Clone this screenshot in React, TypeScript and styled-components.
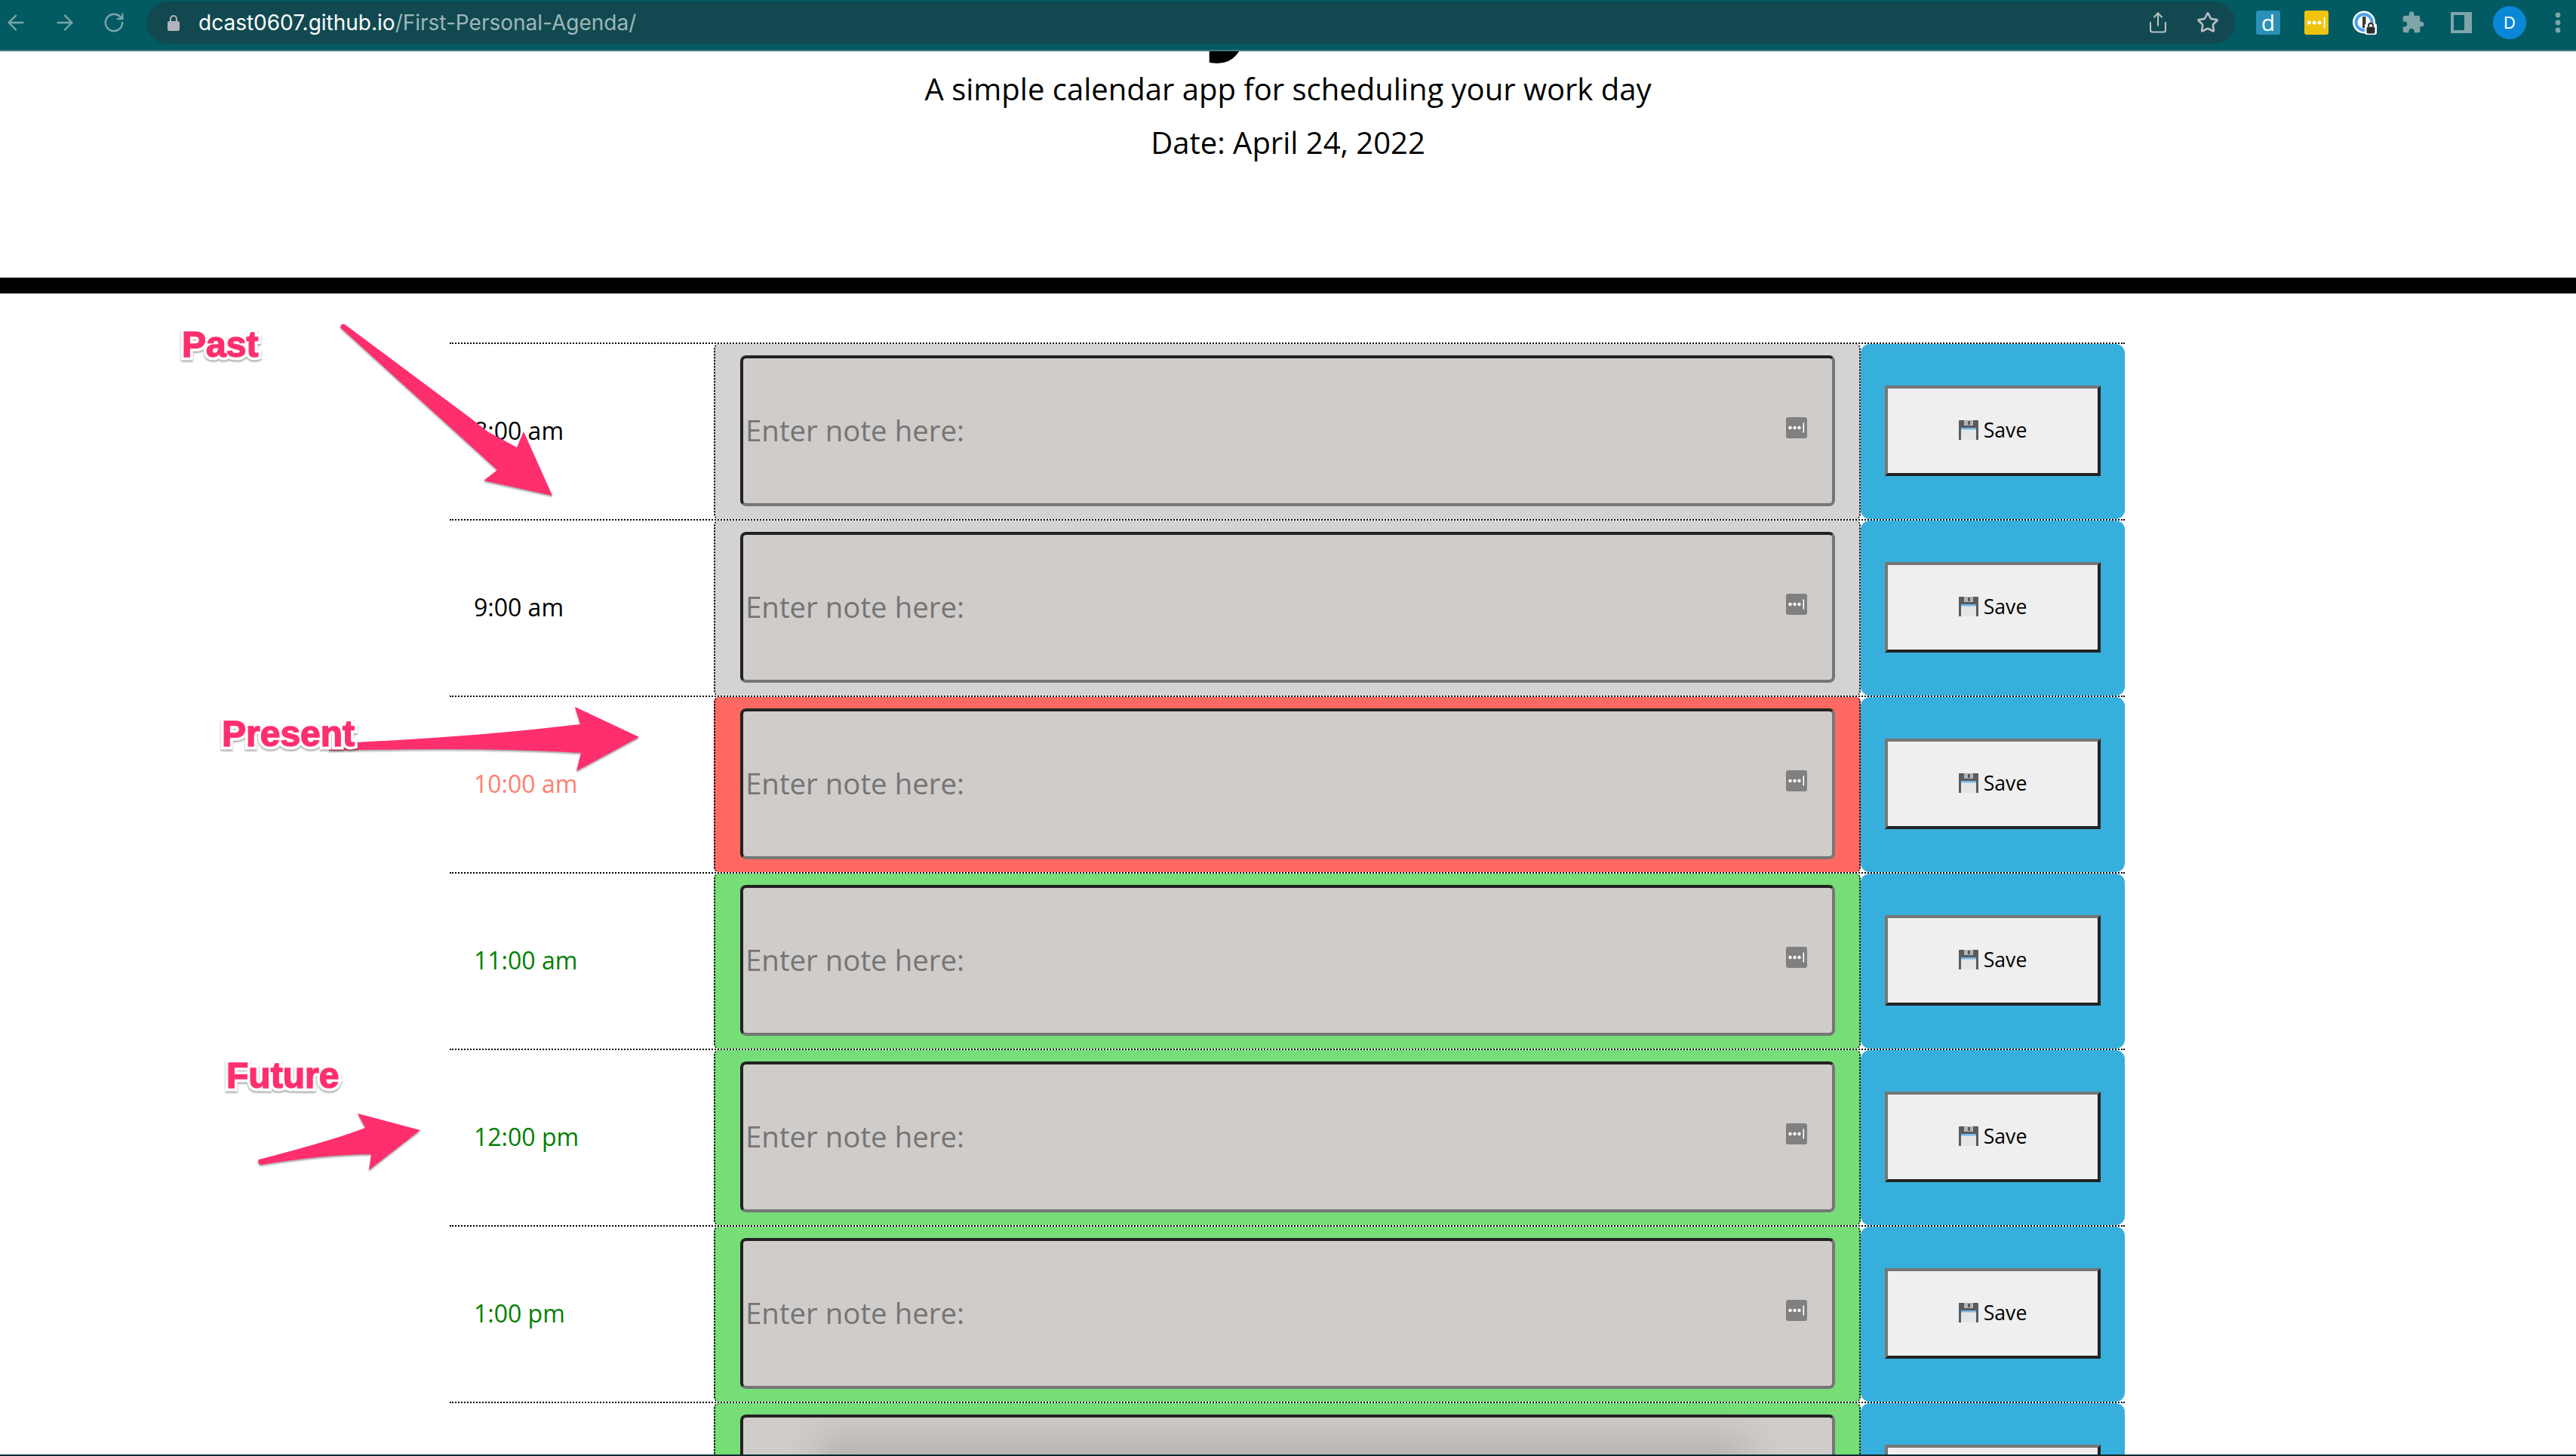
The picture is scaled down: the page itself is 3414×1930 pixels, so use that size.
import { FC } from 'react'
import styled, { createGlobalStyle } from 'styled-components'
import { ArrowLeft, ArrowRight, RotateCw, Share, Star } from 'lucide-react'

type BlockState = 'past' | 'present' | 'future'

const blocks: { hour: string; state: BlockState }[] = [
  { hour: '8:00 am', state: 'past' },
  { hour: '9:00 am', state: 'past' },
  { hour: '10:00 am', state: 'present' },
  { hour: '11:00 am', state: 'future' },
  { hour: '12:00 pm', state: 'future' },
  { hour: '1:00 pm', state: 'future' },
  { hour: '2:00 pm', state: 'future' },
]

const cellColors: Record<BlockState, string> = {
  past: '#d3d3d3',
  present: '#ff6961',
  future: '#77dd77',
}

const hourColors: Record<BlockState, string> = {
  past: '#000',
  present: '#ff8070',
  future: '#008000',
}

const GlobalStyle = createGlobalStyle`
  html, body {
    margin: 0;
    padding: 0;
    background: #fff;
    font-family: 'Open Sans', sans-serif;
  }
`

const Page = styled.div`
  position: relative;
  width: 3414px;
  height: 1930px;
  overflow: hidden;
`

const Toolbar = styled.div`
  position: relative;
  z-index: 3;
  display: flex;
  align-items: center;
  height: 68px;
  box-sizing: border-box;
  padding: 0 8px 6px 5px;
  background: #025a62;
  border-bottom: 2px solid #3d7b80;
`

const NavGroup = styled.div`
  display: flex;
  gap: 33px;
  margin-right: 27px;
  color: #7ba5a8;
`

const ToolButton = styled.div`
  display: flex;
  align-items: center;
  justify-content: center;
  width: 32px;
  height: 44px;
  flex: none;
`

const UrlPill = styled.div`
  display: flex;
  align-items: center;
  flex: 1;
  height: 56px;
  margin-right: 28px;
  padding: 0 21px 0 28px;
  border-radius: 28px;
  background: #124951;
`

const Url = styled.div`
  flex: 1;
  margin-left: 25px;
  font-family: 'Inter', sans-serif;
  font-size: 28px;
  color: #9db7ba;
`

const Host = styled.span`
  color: #fff;
`

const PillIcons = styled.div`
  display: flex;
  align-items: center;
  gap: 36px;
  color: #b6bec0;
`

const Extensions = styled.div`
  display: flex;
  align-items: center;
  gap: 32px;
  color: #7fa5a8;
`

const ExtensionTile = styled.div<{ $bg: string }>`
  display: flex;
  align-items: center;
  justify-content: center;
  width: 32px;
  height: 32px;
  border-radius: 3px;
  background: ${({ $bg }) => $bg};
  color: #fff;
  font-family: 'Open Sans', sans-serif;
  font-size: 30px;
  line-height: 32px;
  flex: none;
`

const Avatar = styled.div`
  display: flex;
  align-items: center;
  justify-content: center;
  width: 44px;
  height: 44px;
  margin-left: -6px;
  margin-right: -6px;
  border-radius: 50%;
  background: #0a88d8;
  color: #fff;
  font-family: 'Inter', sans-serif;
  font-size: 22px;
  flex: none;
`

const Header = styled.header`
  display: flow-root;
  height: 321px;
  box-sizing: border-box;
  text-align: center;
  border-bottom: 21px solid #000;
`

const Title = styled.h1`
  margin: -147px 0 23px;
  font-size: 144px;
  font-weight: 700;
  line-height: 144px;
  color: #000;
`

const Lead = styled.p`
  margin: 0 0 11px;
  font-size: 40px;
  line-height: 60px;
  color: #000;
`

const Schedule = styled.main`
  width: 2220px;
  margin: 65px 0 0 596px;
`

const Row = styled.div`
  display: grid;
  grid-template-columns: 350px 1520px 350px;
  height: 234px;
  box-sizing: border-box;
  border-top: 2px dotted #000;
`

const Hour = styled.div<{ $state: BlockState }>`
  display: flex;
  align-items: center;
  padding: 0 0 4px 32px;
  font-size: 32px;
  color: ${({ $state }) => hourColors[$state]};
`

const NoteCell = styled.div<{ $state: BlockState }>`
  box-sizing: border-box;
  padding: 15px 32px 0 33px;
  background: ${({ $state }) => cellColors[$state]};
  border-left: 2px dotted #000;
  border-right: 2px dotted #000;
  border-radius: 6px;
`

const NoteBox = styled.div`
  position: relative;
  height: 200px;
`

const NoteInput = styled.textarea`
  display: block;
  width: 100%;
  height: 100%;
  box-sizing: border-box;
  margin: 0;
  padding: 68px 3px 0;
  resize: none;
  outline: none;
  background: #d0ccca;
  border-width: 4px;
  border-style: solid;
  border-color: #222 #767676 #767676 #222;
  border-radius: 8px;
  font-family: 'Open Sans', sans-serif;
  font-size: 38.4px;
  line-height: 54px;
  overflow: hidden;

  &::placeholder {
    color: #757575;
    opacity: 1;
  }
`

const PasswordBadge = styled.div`
  position: absolute;
  top: 82px;
  right: 37px;
  display: flex;
  width: 28px;
  height: 28px;
  border-radius: 3px;
  background: #808080;
`

const SaveCell = styled.div`
  display: flex;
  align-items: center;
  justify-content: center;
  padding-bottom: 2px;
  background: #37afdc;
  border-radius: 12px;
`

const SaveButton = styled.button`
  display: flex;
  align-items: center;
  justify-content: center;
  gap: 7px;
  width: 286px;
  height: 120px;
  box-sizing: border-box;
  padding: 0 0 3px;
  background: #efefef;
  border-width: 4px;
  border-style: solid;
  border-color: #767676 #222 #222 #767676;
  font-family: 'Open Sans', sans-serif;
  font-size: 26.67px;
  color: #000;
`

const Annotations = styled.svg`
  position: absolute;
  top: 0;
  left: 0;
  width: 3414px;
  height: 1930px;
  pointer-events: none;
  filter: drop-shadow(0 2px 1px rgba(0, 0, 0, 0.35));
`

const Callout = styled.span<{ $x: number; $y: number }>`
  position: absolute;
  left: ${({ $x }) => $x}px;
  top: ${({ $y }) => $y}px;
  font-family: 'Liberation Sans', Arial, sans-serif;
  font-size: 48px;
  font-weight: 700;
  line-height: 48px;
  color: #ff2f6e;
  -webkit-text-stroke: 9px #fff;
  paint-order: stroke fill;
  filter: drop-shadow(0 2px 1px rgba(0, 0, 0, 0.35));

  &::after {
    content: attr(data-label);
    position: absolute;
    left: 0;
    top: 0;
    -webkit-text-stroke: 1.5px #ff2f6e;
  }
`

const WindowShadow = styled.div`
  position: absolute;
  left: 1110px;
  top: 1932px;
  width: 1180px;
  height: 10px;
  box-shadow: 0 0 50px 26px rgba(0, 0, 0, 0.14);
`

const BottomEdge = styled.div`
  position: absolute;
  z-index: 2;
  left: 0;
  right: 0;
  bottom: 0;
  height: 2px;
  background: #0b2a30;
`

const FloppyIcon: FC = () => (
  <svg width="26" height="26" viewBox="0 0 26 26">
    <path d="M0 1a1 1 0 0 1 1-1h24a1 1 0 0 1 1 1v25H0z" fill="#585b60" />
    <rect x="7" y="0" width="12" height="7" fill="#b5b5b5" />
    <rect x="12" y="1" width="3" height="5" fill="#585b60" />
    <rect x="3" y="10" width="20" height="16" fill="#e4e6e8" />
    <rect x="3" y="10" width="20" height="2.5" fill="#79b7e6" />
  </svg>
)

const LockIcon: FC = () => (
  <svg width="16" height="22" viewBox="0 0 16 22">
    <path d="M4 9V6a4 4 0 0 1 8 0v3" fill="none" stroke="#b0b5bb" strokeWidth="2" />
    <rect x="0" y="9" width="16" height="13" rx="2.5" fill="#b0b5bb" />
  </svg>
)

const PasswordGlyph: FC<{ size: number }> = ({ size }) => (
  <svg width={size} height={size} viewBox="0 0 28 28">
    <circle cx="5.5" cy="14" r="2.2" fill="#fff" />
    <circle cx="11.5" cy="14" r="2.2" fill="#fff" />
    <circle cx="17.5" cy="14" r="2.2" fill="#fff" />
    <rect x="22.5" y="7.5" width="1.6" height="13" fill="#fff" />
  </svg>
)

const OnePasswordIcon: FC = () => (
  <svg width="32" height="32" viewBox="0 0 32 32">
    <circle cx="15" cy="15.5" r="15" fill="#fff" />
    <circle cx="15" cy="15.5" r="10.5" fill="#fff" stroke="#4a9ff0" strokeWidth="4" />
    <rect x="13" y="8" width="4.5" height="15" fill="#3a3a3a" />
    <rect x="16" y="17" width="16" height="15" rx="3" fill="#fff" />
    <path d="M21 21.5v-1.5a3 3 0 0 1 6 0v1.5" fill="none" stroke="#2e2e2e" strokeWidth="2" />
    <rect x="18.5" y="21.5" width="11" height="9" rx="2" fill="#2e2e2e" />
  </svg>
)

const PuzzleIcon: FC = () => (
  <svg width="32" height="32" viewBox="0 0 24 24" fill="currentColor">
    <path d="M20.5 11H19V7c0-1.1-.9-2-2-2h-4V3.5C13 2.12 11.88 1 10.5 1S8 2.12 8 3.5V5H4c-1.1 0-1.99.9-1.99 2v3.8H3.5c1.49 0 2.7 1.21 2.7 2.7s-1.21 2.7-2.7 2.7H2V20c0 1.1.9 2 2 2h3.8v-1.5c0-1.49 1.21-2.7 2.7-2.7 1.49 0 2.7 1.21 2.7 2.7V22H17c1.1 0 2-.9 2-2v-4h1.5c1.38 0 2.5-1.12 2.5-2.5S21.88 11 20.5 11z" />
  </svg>
)

const SidePanelIcon: FC = () => (
  <svg width="28" height="28" viewBox="0 0 28 28">
    <path d="M0 0h28v28H0z M4 4v20h14V4z" fill="currentColor" fillRule="evenodd" />
  </svg>
)

const MenuIcon: FC = () => (
  <svg width="8" height="28" viewBox="0 0 8 28" fill="currentColor">
    <circle cx="4" cy="4" r="3.4" />
    <circle cx="4" cy="14" r="3.4" />
    <circle cx="4" cy="24" r="3.4" />
  </svg>
)

const App: FC = () => {
  return (
    <Page>
      <GlobalStyle />
      <Toolbar>
        <NavGroup>
          <ToolButton><ArrowLeft size={32} strokeWidth={1.8} /></ToolButton>
          <ToolButton><ArrowRight size={32} strokeWidth={1.8} /></ToolButton>
          <ToolButton><RotateCw size={30} strokeWidth={1.9} /></ToolButton>
        </NavGroup>
        <UrlPill>
          <LockIcon />
          <Url><Host>dcast0607.github.io</Host>/First-Personal-Agenda/</Url>
          <PillIcons>
            <Share size={30} strokeWidth={1.7} />
            <Star size={30} strokeWidth={2.1} />
          </PillIcons>
        </UrlPill>
        <Extensions>
          <ExtensionTile $bg="#2a90b8">d</ExtensionTile>
          <ExtensionTile $bg="#f0c40e"><PasswordGlyph size={32} /></ExtensionTile>
          <ToolButton><OnePasswordIcon /></ToolButton>
          <ToolButton><PuzzleIcon /></ToolButton>
          <ToolButton><SidePanelIcon /></ToolButton>
          <ToolButton><Avatar>D</Avatar></ToolButton>
          <ToolButton><MenuIcon /></ToolButton>
        </Extensions>
      </Toolbar>

      <Header>
        <Title>Work Day Scheduler</Title>
        <Lead>A simple calendar app for scheduling your work day</Lead>
        <Lead>Date: April 24, 2022</Lead>
      </Header>

      <Schedule>
        {blocks.map(({ hour, state }) => (
          <Row key={hour}>
            <Hour $state={state}>{hour}</Hour>
            <NoteCell $state={state}>
              <NoteBox>
                <NoteInput placeholder="Enter note here:" />
                <PasswordBadge><PasswordGlyph size={28} /></PasswordBadge>
              </NoteBox>
            </NoteCell>
            <SaveCell>
              <SaveButton><FloppyIcon />Save</SaveButton>
            </SaveCell>
          </Row>
        ))}
      </Schedule>

      <Annotations viewBox="0 0 3414 1930">
        <path
          fill="#ff2f6e"
          d="M451 434 Q452 428 457 430 L626 556 L646 572 L685 593 L694 572 L732 657 L641 637 L659 623 L451 434 Z"
        />
        <path
          fill="#ff2f6e"
          d="M436 993 L472 984 Q640 976 769 960 L762 937 L847 977 L764 1022 L770 998 Q640 990 436 995 Z"
        />
        <path
          fill="#ff2f6e"
          d="M343 1537 Q440 1512 484 1495 L474 1476 L557 1498 L489 1551 L492 1530 Q430 1530 346 1544 Q340 1542 343 1537 Z"
        />
      </Annotations>
      <Callout $x={241} $y={433} data-label="Past">Past</Callout>
      <Callout $x={294} $y={949} data-label="Present">Present</Callout>
      <Callout $x={300} $y={1402} data-label="Future">Future</Callout>

      <WindowShadow />
      <BottomEdge />
    </Page>
  )
}

export default App
